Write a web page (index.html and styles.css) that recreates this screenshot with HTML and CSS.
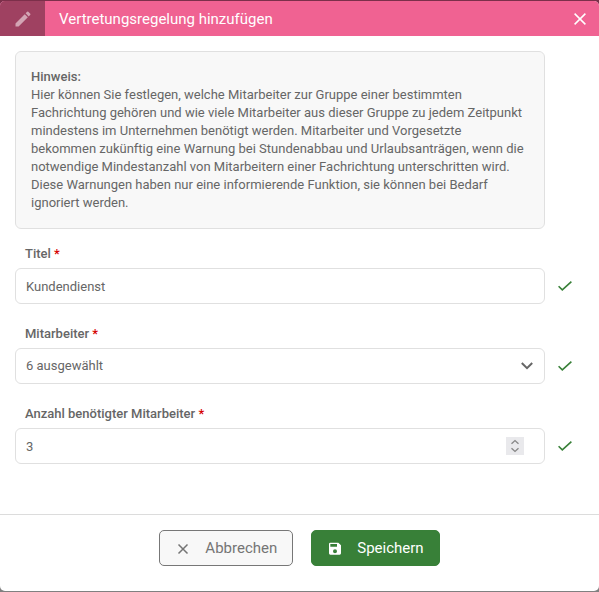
FILE: index.html
```html
<!DOCTYPE html>
<html lang="de">
<head>
  <meta charset="UTF-8">
  <meta name="viewport" content="width=device-width, initial-scale=1">
  <title>Vertretungsregelung hinzufügen</title>
  <link rel="stylesheet" href="styles.css">
</head>
<body>
  <form class="dialog">
    <header class="dialog-header">
      <div class="header-icon">
        <svg width="20" height="20" viewBox="0 0 24 24" fill="currentColor"><path d="M3 17.25V21h3.75L17.81 9.94l-3.75-3.75L3 17.25zM20.71 7.04a1 1 0 0 0 0-1.41l-2.34-2.34a1 1 0 0 0-1.41 0l-1.83 1.83 3.75 3.75 1.83-1.83z"/></svg>
      </div>
      <h1>Vertretungsregelung hinzufügen</h1>
      <button type="button" class="close-btn" aria-label="Schließen">
        <svg width="12" height="12" viewBox="0 0 12 12" fill="none" stroke="currentColor" stroke-width="1.5"><path d="M.6.6l10.8 10.8M11.4.6L.6 11.4"/></svg>
      </button>
    </header>

    <div class="dialog-body">
      <div class="note">
        <strong>Hinweis:</strong><br>
        Hier können Sie festlegen, welche Mitarbeiter zur Gruppe einer bestimmten Fachrichtung gehören und wie viele Mitarbeiter aus dieser Gruppe zu jedem Zeitpunkt mindestens im Unternehmen benötigt werden. Mitarbeiter und Vorgesetzte bekommen zukünftig eine Warnung bei Stundenabbau und Urlaubsanträgen, wenn die notwendige Mindestanzahl von Mitarbeitern einer Fachrichtung unterschritten wird. Diese Warnungen haben nur eine informierende Funktion, sie können bei Bedarf ignoriert werden.
      </div>

      <div class="field">
        <label for="title">Titel <span class="required">*</span></label>
        <div class="control">
          <input type="text" id="title" name="title" value="Kundendienst" required>
        </div>
        <svg class="check" width="14" height="10" viewBox="0 0 14 10" fill="none" stroke="currentColor" stroke-width="1.6"><path d="M.6 5.2l3.7 3.6L13.4.6"/></svg>
      </div>

      <div class="field">
        <label for="employees">Mitarbeiter <span class="required">*</span></label>
        <div class="control">
          <select id="employees" name="employees" required>
            <option value="6">6 ausgewählt</option>
          </select>
          <svg class="chevron" width="12" height="8" viewBox="0 0 12 8" fill="none" stroke="currentColor" stroke-width="2"><path d="M.8 1L6 6.2 11.2 1"/></svg>
        </div>
        <svg class="check" width="14" height="10" viewBox="0 0 14 10" fill="none" stroke="currentColor" stroke-width="1.6"><path d="M.6 5.2l3.7 3.6L13.4.6"/></svg>
      </div>

      <div class="field">
        <label for="count">Anzahl benötigter Mitarbeiter <span class="required">*</span></label>
        <div class="control">
          <input type="number" id="count" name="count" value="3" min="1" required>
          <svg class="spinner" width="18" height="18" viewBox="0 0 18 18" fill="none" stroke="currentColor" stroke-width="1.4"><path d="M5.5 6.8L9 3.6l3.5 3.2M5.5 11.2L9 14.4l3.5-3.2"/></svg>
        </div>
        <svg class="check" width="14" height="10" viewBox="0 0 14 10" fill="none" stroke="currentColor" stroke-width="1.6"><path d="M.6 5.2l3.7 3.6L13.4.6"/></svg>
      </div>
    </div>

    <footer class="dialog-footer">
      <button type="button" class="btn btn-cancel">
        <svg width="16" height="16" viewBox="0 0 16 16" fill="none" stroke="currentColor" stroke-width="1.5"><path d="M3.5 4.5l9 9M12.5 4.5l-9 9"/></svg>
        Abbrechen
      </button>
      <button type="submit" class="btn btn-save">
        <svg width="16" height="16" viewBox="0 0 24 24" fill="currentColor"><path d="M17 4H5a2 2 0 0 0-2 2v14a2 2 0 0 0 2 2h14a2 2 0 0 0 2-2V8l-4-4zm-5 16a3 3 0 1 1 0-6 3 3 0 0 1 0 6zm3-10H5V6h10v4z"/></svg>
        Speichern
      </button>
    </footer>
  </form>
</body>
</html>
```

FILE: styles.css
```css
* {
  box-sizing: border-box;
}

html {
  background: linear-gradient(#7c2f4a 8px, #808080 8px);
}

body {
  margin: 0;
  padding: 1px 0;
  min-height: 100vh;
  display: flex;
  font-family: Roboto, "Liberation Sans", sans-serif;
  font-size: 13px;
  line-height: 18px;
  color: #666;
}

.dialog {
  flex: 1;
  display: flex;
  flex-direction: column;
  background: #fff;
  border-radius: 5px;
  overflow: hidden;
}

.dialog-header {
  display: flex;
  align-items: center;
  height: 35px;
  background: #f06292;
  color: #fff;
}

.header-icon {
  display: flex;
  align-items: center;
  justify-content: center;
  width: 45px;
  height: 100%;
  background: #9f4161;
  color: #d3a5b4;
}

.dialog-header h1 {
  flex: 1;
  margin: 0 0 0 14px;
  font-size: 15px;
  font-weight: 400;
}

.close-btn {
  display: flex;
  padding: 12px 13px;
  border: none;
  background: none;
  color: inherit;
  cursor: pointer;
}

.dialog-body {
  flex: 1;
  padding: 15px 15px 50px;
}

.note {
  margin: 0 39px 16px 0;
  padding: 16px 15px;
  border: 1px solid #e0e0e0;
  border-radius: 6px;
  background: #f8f8f8;
}

strong,
label {
  font-weight: 500;
}

.field {
  display: grid;
  grid-template-columns: 1fr 39px;
  row-gap: 5px;
  align-items: center;
}

.field + .field {
  margin-top: 21px;
}

.field label {
  grid-column: 1 / -1;
  padding-left: 10px;
}

.required {
  color: #d50000;
}

.control {
  position: relative;
}

.control input,
.control select {
  display: block;
  width: 100%;
  height: 36px;
  padding: 0 10px;
  border: 1px solid #e0e0e0;
  border-radius: 6px;
  background: #fff;
  color: inherit;
  font: inherit;
  appearance: none;
}

.control input[type="number"] {
  appearance: textfield;
}

.chevron,
.spinner {
  position: absolute;
  top: 0;
  bottom: 0;
  margin: auto 0;
  pointer-events: none;
}

.chevron {
  right: 12px;
}

.spinner {
  right: 21px;
  background: #e9e9ec;
  color: #888;
}

.check {
  justify-self: center;
  color: #388038;
}

.dialog-footer {
  display: flex;
  justify-content: center;
  gap: 18px;
  padding: 15px 15px 25px;
  border-top: 1px solid #dcdcdc;
}

.btn {
  display: flex;
  align-items: center;
  gap: 14px;
  height: 36px;
  padding: 0 15px;
  border: 1px solid #777;
  border-radius: 5px;
  background: #f8f8f8;
  color: #757575;
  font-family: inherit;
  font-size: 15px;
  cursor: pointer;
}

.btn-save {
  border-color: #388038;
  background: #388038;
  color: #fff;
}
```
